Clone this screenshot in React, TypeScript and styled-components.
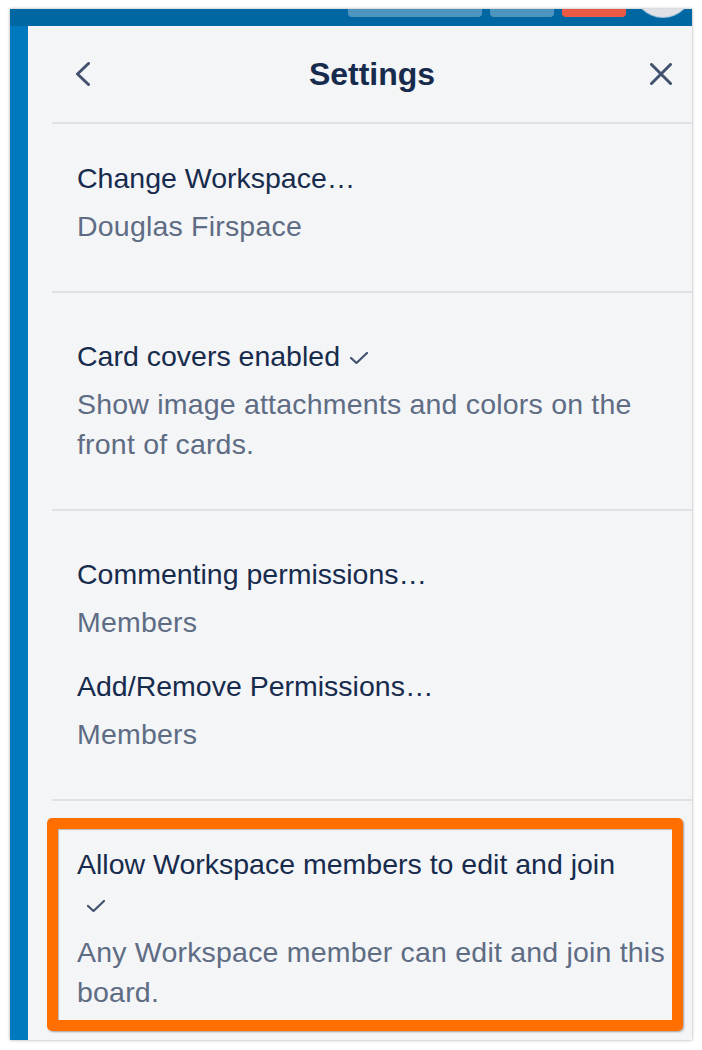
import styled, { createGlobalStyle } from 'styled-components'

type Setting = {
  title: string
  desc: string
  checked?: boolean
}

type Group = {
  items: Setting[]
  highlighted?: boolean
}

const GROUPS: Group[] = [
  { items: [{ title: 'Change Workspace…', desc: 'Douglas Firspace' }] },
  {
    items: [
      {
        title: 'Card covers enabled',
        checked: true,
        desc: 'Show image attachments and colors on the front of cards.',
      },
    ],
  },
  {
    items: [
      { title: 'Commenting permissions…', desc: 'Members' },
      { title: 'Add/Remove Permissions…', desc: 'Members' },
    ],
  },
  {
    highlighted: true,
    items: [
      {
        title: 'Allow Workspace members to edit and join',
        checked: true,
        desc: 'Any Workspace member can edit and join this board.',
      },
    ],
  },
]

const CheckIcon = () => (
  <svg width="18" height="12" viewBox="0 0 18 12" fill="none">
    <polyline points="1,6 6.5,11 17,1" stroke="#42526e" strokeWidth="2.2" strokeLinecap="round" strokeLinejoin="round" />
  </svg>
)

const BackIcon = () => (
  <svg width="14" height="24" viewBox="0 0 14 24" fill="none">
    <path d="M12.5 1.5 L1.5 12 L12.5 22.5" stroke="#42526e" strokeWidth="3" strokeLinecap="round" strokeLinejoin="round" />
  </svg>
)

const CloseIcon = () => (
  <svg width="22" height="22" viewBox="0 0 22 22" fill="none">
    <path d="M1.5 1.5 L20.5 20.5 M20.5 1.5 L1.5 20.5" stroke="#42526e" strokeWidth="3" strokeLinecap="round" />
  </svg>
)

const App = () => {
  return (
    <>
      <GlobalStyle />
      <Frame>
        <TopBar>
          <TopButton $width={134} />
          <TopButton $width={64} />
          <TopButton $width={64} $danger />
          <Avatar />
        </TopBar>
        <Body>
          <BoardStrip />
          <Panel>
            <Header>
              <IconButton aria-label="Back">
                <BackIcon />
              </IconButton>
              <Title>Settings</Title>
              <IconButton aria-label="Close">
                <CloseIcon />
              </IconButton>
            </Header>
            {GROUPS.map((group, gi) => (
              <Section key={gi}>
                {group.items.map((item) => (
                  <Item key={item.title}>
                    <ItemTitle>
                      {item.title}
                      {item.checked && (
                        <Check>
                          <CheckIcon />
                        </Check>
                      )}
                    </ItemTitle>
                    <ItemDesc>{item.desc}</ItemDesc>
                  </Item>
                ))}
                {group.highlighted && <Highlight />}
              </Section>
            ))}
          </Panel>
        </Body>
      </Frame>
    </>
  )
}

export default App

/* ****************************************************************
  Board menu – Settings panel
*******************************************************************/

const GlobalStyle = createGlobalStyle`
  body {
    margin: 0;
    background: #ffffff;
    font-family: "Liberation Sans", Arial, sans-serif;
  }
`

const Frame = styled.div`
  margin: 9px 10px;
  width: 682px;
  height: 1031px;
  display: grid;
  grid-template-rows: 17px 1fr;
  box-shadow: 0 0 3px rgba(0, 0, 0, 0.35);
  overflow: hidden;
`

const TopBar = styled.div`
  display: flex;
  justify-content: flex-end;
  align-items: flex-start;
  gap: 8px;
  background: #0067a3;
  overflow: hidden;
`

const TopButton = styled.div<{ $width: number; $danger?: boolean }>`
  width: ${({ $width }) => $width}px;
  height: 8px;
  border-radius: 0 0 4px 4px;
  background: ${({ $danger }) => ($danger ? '#eb5a46' : 'rgba(255, 255, 255, 0.3)')};
`

const Avatar = styled.div`
  flex: none;
  width: 58px;
  height: 58px;
  margin-top: -50px;
  border-radius: 50%;
  background: #dfe1e6;
  box-shadow: 0 0 0 1px rgba(255, 255, 255, 0.6);
`

const Body = styled.div`
  display: grid;
  grid-template-columns: 18px 1fr;
  min-height: 0;
`

const BoardStrip = styled.div`
  background: #0079bf;
`

const Panel = styled.div`
  background: #f4f5f7;
  padding-left: 24px;
  overflow: hidden;
`

const Header = styled.header`
  display: flex;
  align-items: center;
  height: 96px;
  border-bottom: 2px solid #dfe1e6;
`

const IconButton = styled.button`
  flex: none;
  width: 62px;
  height: 48px;
  display: flex;
  align-items: center;
  justify-content: center;
  padding: 0;
  border: none;
  background: none;
`

const Title = styled.h2`
  flex: 1;
  margin: 0;
  text-align: center;
  font-size: 32px;
  font-weight: 700;
  line-height: 40px;
  color: #172b4d;
`

const Section = styled.section`
  position: relative;
  display: flex;
  flex-direction: column;
  gap: 24px;
  padding: 43px 23px 45px 25px;
  border-top: 2px solid #dfe1e6;

  &:first-of-type {
    border-top: none;
    padding-top: 34px;
  }
`

const Item = styled.div`
  display: flex;
  flex-direction: column;
  gap: 8px;
`

const ItemTitle = styled.div`
  font-size: 28.5px;
  line-height: 40px;
  color: #172b4d;
`

const Check = styled.span`
  display: inline-block;
  width: 48px;
  height: 12px;
  margin-left: 10px;
  line-height: 0;
  vertical-align: middle;
`

const ItemDesc = styled.div`
  font-size: 28.5px;
  line-height: 40px;
  letter-spacing: 0.2px;
  color: #5e6c84;
`

const Highlight = styled.div`
  position: absolute;
  left: -5px;
  top: 17px;
  width: 636px;
  height: 213px;
  box-sizing: border-box;
  border: 11px solid #ff6f00;
  border-radius: 5px;
  box-shadow: 1px 1px 2px rgba(0, 0, 0, 0.35), inset 1px 1px 1px rgba(0, 0, 0, 0.25);
  pointer-events: none;
`
